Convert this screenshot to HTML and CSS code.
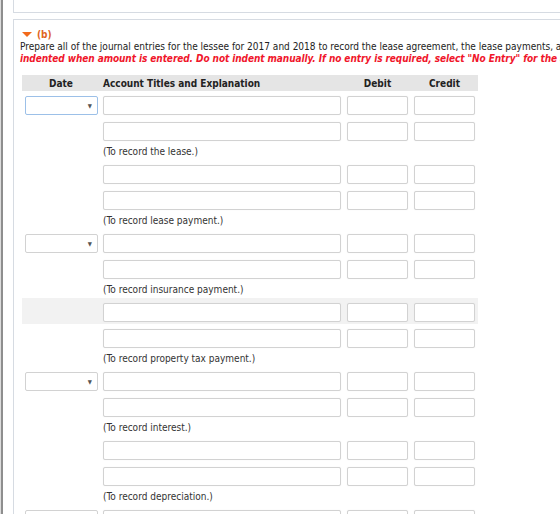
FILE: index.html
```html
<!DOCTYPE html>
<html lang="en">
<head>
  <meta charset="UTF-8">
  <title>Journal entries (b)</title>
  <link rel="stylesheet" href="styles.css">
</head>
<body>
  <div class="shell">
    <div class="shell-inner">
      <div class="panel panel-top"></div>

      <div class="panel panel-part">
        <div class="part-title"><span class="caret"></span>(b)</div>
        <div class="instr">Prepare all of the journal entries for the lessee for 2017 and 2018 to record the lease agreement, the lease payments, and all expenses related to this lease.</div>
        <div class="instr red">indented when amount is entered. Do not indent manually. If no entry is required, select "No Entry" for the account titles and enter 0 for the amounts.</div>

        <table class="journal">
          <colgroup>
            <col class="c-date"><col class="c-acct"><col class="c-amt"><col class="c-amt">
          </colgroup>
          <thead>
            <tr>
              <th>Date</th>
              <th class="left">Account Titles and Explanation</th>
              <th>Debit</th>
              <th>Credit</th>
            </tr>
          </thead>
          <tbody>
            <tr>
              <td><div class="pick focus"></div></td>
              <td><input class="field" type="text"></td>
              <td><input class="field" type="text"></td>
              <td><input class="field" type="text"></td>
            </tr>
            <tr>
              <td></td>
              <td><input class="field" type="text"></td>
              <td><input class="field" type="text"></td>
              <td><input class="field" type="text"></td>
            </tr>
            <tr class="note"><td></td><td colspan="3">(To record the lease.)</td></tr>

            <tr>
              <td></td>
              <td><input class="field" type="text"></td>
              <td><input class="field" type="text"></td>
              <td><input class="field" type="text"></td>
            </tr>
            <tr>
              <td></td>
              <td><input class="field" type="text"></td>
              <td><input class="field" type="text"></td>
              <td><input class="field" type="text"></td>
            </tr>
            <tr class="note"><td></td><td colspan="3">(To record lease payment.)</td></tr>

            <tr>
              <td><div class="pick"></div></td>
              <td><input class="field" type="text"></td>
              <td><input class="field" type="text"></td>
              <td><input class="field" type="text"></td>
            </tr>
            <tr>
              <td></td>
              <td><input class="field" type="text"></td>
              <td><input class="field" type="text"></td>
              <td><input class="field" type="text"></td>
            </tr>
            <tr class="note"><td></td><td colspan="3">(To record insurance payment.)</td></tr>

            <tr class="hover">
              <td></td>
              <td><input class="field" type="text"></td>
              <td><input class="field" type="text"></td>
              <td><input class="field" type="text"></td>
            </tr>
            <tr>
              <td></td>
              <td><input class="field" type="text"></td>
              <td><input class="field" type="text"></td>
              <td><input class="field" type="text"></td>
            </tr>
            <tr class="note"><td></td><td colspan="3">(To record property tax payment.)</td></tr>

            <tr>
              <td><div class="pick"></div></td>
              <td><input class="field" type="text"></td>
              <td><input class="field" type="text"></td>
              <td><input class="field" type="text"></td>
            </tr>
            <tr>
              <td></td>
              <td><input class="field" type="text"></td>
              <td><input class="field" type="text"></td>
              <td><input class="field" type="text"></td>
            </tr>
            <tr class="note"><td></td><td colspan="3">(To record interest.)</td></tr>

            <tr>
              <td></td>
              <td><input class="field" type="text"></td>
              <td><input class="field" type="text"></td>
              <td><input class="field" type="text"></td>
            </tr>
            <tr>
              <td></td>
              <td><input class="field" type="text"></td>
              <td><input class="field" type="text"></td>
              <td><input class="field" type="text"></td>
            </tr>
            <tr class="note"><td></td><td colspan="3">(To record depreciation.)</td></tr>

            <tr>
              <td><div class="pick"></div></td>
              <td><input class="field" type="text"></td>
              <td><input class="field" type="text"></td>
              <td><input class="field" type="text"></td>
            </tr>
          </tbody>
        </table>
      </div>
    </div>
  </div>
</body>
</html>
```

FILE: styles.css
```css
* {
  margin: 0;
  padding: 0;
  box-sizing: border-box;
}

body {
  background: #fff;
  height: 100vh;
  overflow: hidden;
  font-family: "DejaVu Sans Condensed", "DejaVu Sans", sans-serif;
  font-size: 10px;
  color: #222;
}

.shell {
  border-left: 1px solid #dcdcdc;
  min-height: 100vh;
}

.shell-inner {
  border-left: 2px solid #8e8e8e;
  padding-left: 10px;
  min-height: 100vh;
}

.panel {
  border-left: 1px solid #d6dbe2;
  width: 900px;
}

.panel-top {
  height: 13px;
  border-bottom: 1px solid #d6dbe2;
  margin-bottom: 6px;
}

.panel-part {
  border-top: 1px solid #d6dbe2;
  padding: 8px 0 0 6px;
  min-height: 600px;
}

.part-title {
  display: flex;
  align-items: center;
  gap: 5px;
  color: #e0641e;
  font-weight: bold;
  font-size: 10px;
  height: 13px;
  margin-left: 2px;
}

.caret {
  width: 0;
  height: 0;
  border-left: 5px solid transparent;
  border-right: 5px solid transparent;
  border-top: 5px solid #f26a1b;
}

.instr {
  white-space: nowrap;
  line-height: 12px;
}

.red {
  color: #f0162b;
  font-weight: bold;
  font-style: italic;
  letter-spacing: -0.08px;
}

.journal {
  border-collapse: collapse;
  table-layout: fixed;
  width: 456px;
  margin: 10px 0 0 2px;
}

.c-date { width: 78px; }
.c-acct { width: 244px; }
.c-amt { width: 67px; }

.journal th {
  background: #e5e5e5;
  font-weight: bold;
  text-align: center;
  height: 16px;
  padding: 0 3px;
  color: #222;
}

.journal th.left {
  text-align: left;
}

.journal td {
  height: 26px;
  padding: 5px 3px 2px;
  vertical-align: top;
}

.journal tr.hover td {
  background: #f2f2f2;
}

.journal tr.note td {
  height: 17px;
  padding: 3px 3px 0;
  line-height: 12px;
  color: #333;
}

.field {
  display: block;
  width: 100%;
  height: 19px;
  border: 1px solid #d2d2d2;
  border-radius: 2px;
  box-shadow: 0 0 1px #e4e4e4;
  background: #fff;
  font: inherit;
  outline: none;
}

.pick {
  position: relative;
  width: 73px;
  height: 19px;
  border: 1px solid #d2d2d2;
  border-radius: 2px;
  background: #fff;
}

.pick.focus {
  border-color: #9cc0e8;
}

.pick::after {
  content: "\25BC";
  position: absolute;
  right: 5px;
  top: 5px;
  font-size: 6px;
  color: #555;
}
```
